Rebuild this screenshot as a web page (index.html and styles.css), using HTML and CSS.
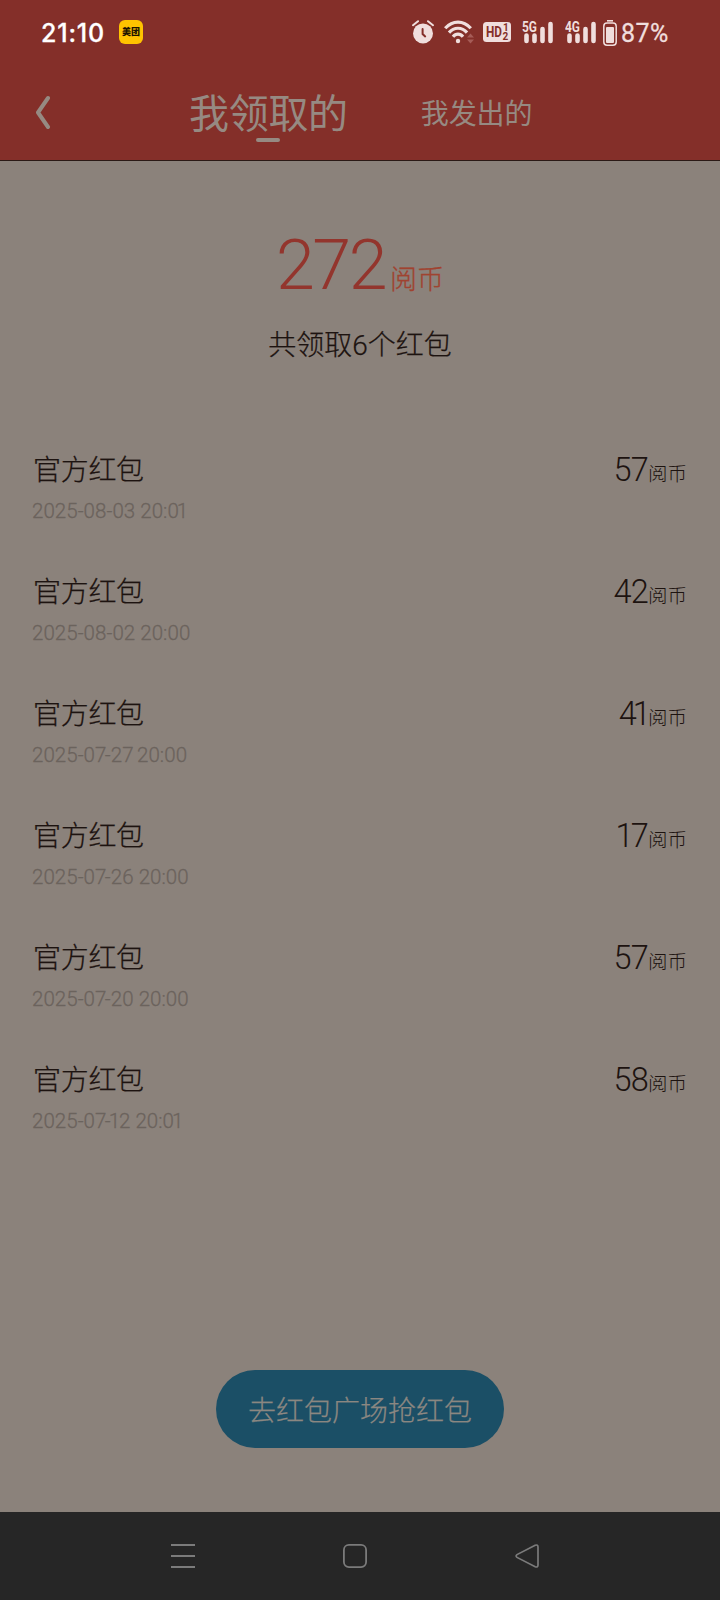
FILE: index.html
```
<!DOCTYPE html>
<html lang="zh-CN">
<head>
  <meta charset="UTF-8">
  <title>我领取的红包</title>
  <meta name="viewport" content="width=device-width, initial-scale=1.0">
  <link rel="stylesheet" href="styles.css">
</head>
<body>
  <div class="status-bar">
    <span class="time">21:10</span>
    <span class="app-badge">美团</span>
    <div class="indicators">
      <svg class="alarm" width="22" height="24" viewBox="0 0 22 24">
        <circle cx="11" cy="13.4" r="10" fill="#f0dedd"/>
        <path d="M1 5.2L6 1.2M21 5.2L16 1.2" stroke="#f0dedd" stroke-width="2" stroke-linecap="round"/>
        <path d="M10.6 9v5l2.6 2.4" fill="none" stroke="#842f29" stroke-width="2" stroke-linecap="round"/>
      </svg>
      <svg class="wifi" width="30" height="24" viewBox="0 0 30 24">
        <g fill="none" stroke="#f0dedd" stroke-width="3.2">
          <path d="M1.2 8.2C8.5 0 19.5 0 26.8 8.2"/>
          <path d="M5 12.6C10 6.8 18 6.8 23 12.6"/>
          <path d="M9 16.8C11.8 13.3 16.2 13.3 19 16.8"/>
        </g>
        <circle cx="14" cy="21" r="2.2" fill="#f0dedd"/>
        <path d="M23 17.5l3.5-4 3.5 4zM23 19.5l3.5 4 3.5-4z" fill="#a65c57"/>
      </svg>
      <svg class="hd" width="28" height="20" viewBox="0 0 28 20">
        <rect width="28" height="20" rx="3.5" fill="#f0dedd"/>
        <text x="3" y="15.2" class="hd-text" textLength="16" lengthAdjust="spacingAndGlyphs">HD</text>
        <text x="20" y="9.2" class="hd-num">1</text>
        <text x="19.5" y="18" class="hd-num">2</text>
      </svg>
      <svg class="signal" width="32" height="24" viewBox="0 0 32 24">
        <text x="0" y="11.5" class="net" textLength="15" lengthAdjust="spacingAndGlyphs">5G</text>
        <path d="M4.5 15.5v5.5M12.5 15.5v5.5M20.5 9v12M28.5 4v17" stroke="#f0dedd" stroke-width="4.6" stroke-linecap="round"/>
      </svg>
      <svg class="signal" width="32" height="24" viewBox="0 0 32 24">
        <text x="0" y="11.5" class="net" textLength="15" lengthAdjust="spacingAndGlyphs">4G</text>
        <path d="M4.5 15.5v5.5M12.5 15.5v5.5M20.5 9v12M28.5 4v17" stroke="#f0dedd" stroke-width="4.6" stroke-linecap="round"/>
      </svg>
      <svg class="battery" width="14" height="26" viewBox="0 0 14 26">
        <path d="M4 .8h6" stroke="#f0dedd" stroke-width="1.6"/>
        <rect x=".8" y="3" width="12.4" height="22.2" rx="3.2" fill="none" stroke="#f0dedd" stroke-width="1.5"/>
        <rect x="3" y="7" width="8" height="16" rx="1" fill="#f0dedd"/>
      </svg>
      <span class="percent">87%</span>
    </div>
  </div>

  <div class="header">
    <svg class="back" width="16" height="34" viewBox="0 0 16 34">
      <path d="M13 3L3 17.5L13 32" fill="none" stroke="#968a82" stroke-width="4" stroke-linecap="round" stroke-linejoin="round"/>
    </svg>
    <div class="tab active">我领取的</div>
    <div class="tab">我发出的</div>
  </div>

  <div class="content">
    <div class="total"><span class="total-num">272</span><span class="total-unit">阅币</span></div>
    <div class="summary">共领取<span class="count">6</span>个红包</div>

    <div class="list">
      <div class="item">
        <div class="info"><div class="name">官方红包</div><div class="date">2025-08-03 20:0<span class="one">1</span></div></div>
        <div class="amount">57<span class="unit">阅币</span></div>
      </div>
      <div class="item">
        <div class="info"><div class="name">官方红包</div><div class="date">2025-08-02 20:00</div></div>
        <div class="amount">42<span class="unit">阅币</span></div>
      </div>
      <div class="item">
        <div class="info"><div class="name">官方红包</div><div class="date">2025-0<span class="seven">7</span>-2<span class="seven">7</span> 20:00</div></div>
        <div class="amount">4<span class="one">1</span><span class="unit">阅币</span></div>
      </div>
      <div class="item">
        <div class="info"><div class="name">官方红包</div><div class="date">2025-0<span class="seven">7</span>-26 20:00</div></div>
        <div class="amount"><span class="one">1</span>7<span class="unit">阅币</span></div>
      </div>
      <div class="item">
        <div class="info"><div class="name">官方红包</div><div class="date">2025-0<span class="seven">7</span>-20 20:00</div></div>
        <div class="amount">57<span class="unit">阅币</span></div>
      </div>
      <div class="item">
        <div class="info"><div class="name">官方红包</div><div class="date">2025-0<span class="seven">7</span>-<span class="one">1</span>2 20:0<span class="one">1</span></div></div>
        <div class="amount">58<span class="unit">阅币</span></div>
      </div>
    </div>

    <button class="btn">去红包广场抢红包</button>
  </div>

  <div class="nav-bar">
    <svg width="24" height="24" viewBox="0 0 24 24"><path d="M0 1h24M0 12h24M0 23h24" stroke="#7b7b7b" stroke-width="2"/></svg>
    <svg width="24" height="24" viewBox="0 0 24 24"><rect x=".9" y=".9" width="22.2" height="22.2" rx="5" fill="none" stroke="#7b7b7b" stroke-width="1.8"/></svg>
    <svg width="24" height="24" viewBox="0 0 24 24"><path d="M20.2 1.2L2 10.6Q.2 12 2 13.4L20.2 22.8Q23 23.6 23 21V3Q23 .4 20.2 1.2z" fill="none" stroke="#7b7b7b" stroke-width="1.7"/></svg>
  </div>
</body>
</html>
```

FILE: styles.css
```
* { box-sizing: border-box; }
body { margin: 0; width: 720px; height: 1600px; display: flex; flex-direction: column; background: #8b827b; font-family: "Noto Sans CJK SC", sans-serif; font-weight: 300; color: #1d1310; }

.status-bar { height: 64px; display: flex; align-items: center; padding: 0 50px 0 41px; background: #842f29; }
.time { width: 78px; padding-top: 2px; font: 500 25px/30px Inter, sans-serif; letter-spacing: .8px; color: #fff; -webkit-text-stroke: .3px #fff; }
.app-badge { width: 24px; height: 24px; border-radius: 6px; background: #ffc300; color: #1d1300; font-size: 9px; font-weight: 900; line-height: 24px; text-align: center; }
.indicators { display: flex; align-items: center; margin-left: auto; }
.wifi { margin-left: 10px; }
.hd { margin-left: 9px; }
.signal { margin-left: 11px; }
.battery { margin: 2px 4px 0 6px; }
.percent { width: 49px; padding-top: 4px; font: 400 25px/30px Roboto, sans-serif; letter-spacing: .5px; color: #f0dedd; -webkit-text-stroke: .3px #f0dedd; }
.hd-text { font: 700 15px Roboto, sans-serif; fill: #842f29; }
.hd-num { font: 700 10px Roboto, sans-serif; fill: #842f29; }
.net { font: 700 14px Roboto, sans-serif; fill: #f0dedd; }

.header { height: 97px; display: flex; align-items: flex-start; padding: 0 0 0 35px; background: #842f29; border-bottom: 1px solid #2b1a16; color: #968a82; font-weight: 400; }
.back { margin-top: 31px; }
.tab { margin: 28px 0 0 73px; font-size: 28px; line-height: 40px; letter-spacing: -.1px; }
.tab.active { display: flex; flex-direction: column; align-items: center; margin: 23px 0 0 138px; font-size: 40px; line-height: 48px; letter-spacing: -.3px; }
.tab.active::after { content: ""; width: 24px; height: 4px; margin-top: 3px; border-radius: 2px; background: #968a82; }

.content { flex: 1; display: flex; flex-direction: column; padding: 62px 33px 64px; }
.total { display: flex; justify-content: center; align-items: baseline; height: 84px; line-height: 84px; color: #93352d; }
.total-num { font-family: Roboto, sans-serif; font-size: 70px; letter-spacing: -2.5px; }
.total-unit { margin-left: 5px; font-size: 27px; color: #a04330; -webkit-text-stroke: .3px; }
.summary { height: 40px; margin-top: 16px; font-size: 28px; line-height: 40px; text-align: center; -webkit-text-stroke: .25px; }
.count { font-family: Roboto, sans-serif; }

.list { margin-top: 85px; }
.item { display: flex; justify-content: space-between; height: 122px; }
.name { font-size: 28px; line-height: 40px; letter-spacing: -.3px; -webkit-text-stroke: .25px; }
.date { margin: 10px 0 0 -1px; font: 300 20.5px/26px Roboto, sans-serif; letter-spacing: .05px; white-space: nowrap; color: #6b635d; -webkit-text-stroke: .3px; }
.amount { font-family: Roboto, sans-serif; font-size: 32.5px; line-height: 44px; letter-spacing: -.8px; }
.unit { font-family: "Noto Sans CJK SC", sans-serif; font-size: 19.5px; letter-spacing: 0; }
/* proportional figures */
.one { margin: 0 -.06em 0 -.1em; }
.seven { margin-right: -.08em; }

.btn { align-self: center; width: 288px; height: 78px; margin-top: auto; padding: 0; border: none; border-radius: 39px; background: #1b4f66; color: #8b8781; font: inherit; font-size: 28px; -webkit-text-stroke: .25px; }

.nav-bar { height: 88px; display: flex; justify-content: center; align-items: center; gap: 148px; padding-right: 10px; background: #262626; }
```
